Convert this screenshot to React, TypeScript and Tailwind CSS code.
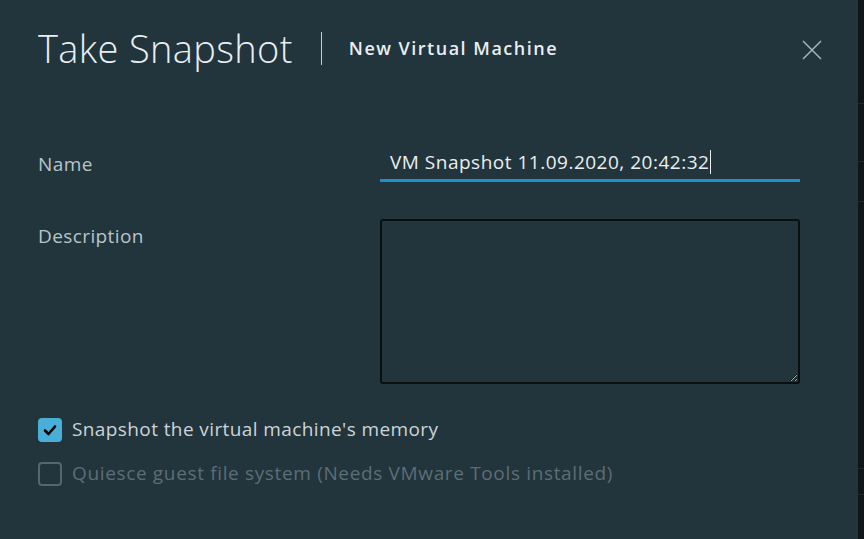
import React from 'react';

const App: React.FC = () => {
  return (
    <div className="flex h-[539px] w-[864px] overflow-hidden bg-[#0f1518]" style={{ fontFamily: '"Open Sans", Lato, sans-serif' }}>
      <div className="flex w-[858px] flex-col bg-[#22343c] pl-[38px] pr-[36px]">
        {/* header */}
        <div className="flex h-[96px] items-center">
          <h1 className="text-[38px] font-light leading-none tracking-[0.35px] text-[#e9eef1]">Take Snapshot</h1>
          <div className="ml-[28px] mr-[27px] h-[33px] w-px bg-[#c7ced2]" />
          <h2 className="text-[18px] font-semibold tracking-[1.5px] text-[#e9eef1]">New Virtual Machine</h2>
          <button className="ml-auto mt-[3px] flex h-[20px] w-[20px] items-center justify-center text-[#a9b5bb]">
            <svg width="20" height="20" viewBox="0 0 20 20" fill="none" stroke="currentColor" strokeWidth="1.5">
              <path d="M1 1 L19 19 M19 1 L1 19" />
            </svg>
          </button>
        </div>

        {/* form */}
        <div className="mt-[52px] flex items-start">
          <label className="w-[342px] pt-[2px] text-[19px] tracking-[0.4px] text-[#b9c4c9]">Name</label>
          <div className="flex w-[420px] items-center border-b-[3px] border-[#1a90cf] pb-[2px] pl-[10px]">
            <span className="text-[19px] tracking-[0.5px] text-[#eaeff1]">VM Snapshot 11.09.2020, 20:42:32</span>
            <span className="ml-px h-[24px] w-px bg-[#eaeff1]" />
          </div>
        </div>

        <div className="mt-[37px] flex items-start">
          <label className="w-[342px] pt-[3px] text-[19px] tracking-[0.4px] text-[#b9c4c9]">Description</label>
          <textarea className="h-[165px] w-[420px] resize-y rounded-[3px] border-2 border-[#0a0f12] bg-[#22343c] outline-none [color-scheme:dark]" />
        </div>

        {/* options */}
        <div className="mt-[34px] flex flex-col gap-[20px]">
          <div className="flex h-[24px] items-center gap-[10px]">
            <span className="flex h-[24px] w-[24px] items-center justify-center rounded-[4px] bg-[#49afd9]">
              <svg width="14" height="12" viewBox="0 0 14 12" fill="none" stroke="#000" strokeWidth="2.6" strokeLinecap="round" strokeLinejoin="round">
                <path d="M2 6.5 L5.5 10 L12 2.5" />
              </svg>
            </span>
            <span className="text-[19px] tracking-[0.4px] text-[#ccd4d8]">Snapshot the virtual machine's memory</span>
          </div>
          <div className="flex h-[24px] items-center gap-[10px]">
            <span className="h-[24px] w-[24px] rounded-[4px] border-2 border-[#56666d]" />
            <span className="text-[19px] tracking-[0.65px] text-[#5c6e76]">Quiesce guest file system (Needs VMware Tools installed)</span>
          </div>
        </div>
      </div>
      <div className="flex flex-1 flex-col">
        <div className="mt-[103px] h-px bg-[#1f272b]" />
        <div className="mt-[57px] h-px bg-[#1f272b]" />
        <div className="mt-[39px] h-px bg-[#1f272b]" />
        <div className="mt-[266px] h-px bg-[#1f272b]" />
        <div className="mt-[25px] h-px bg-[#1f272b]" />
      </div>
    </div>
  );
};

export default App;
